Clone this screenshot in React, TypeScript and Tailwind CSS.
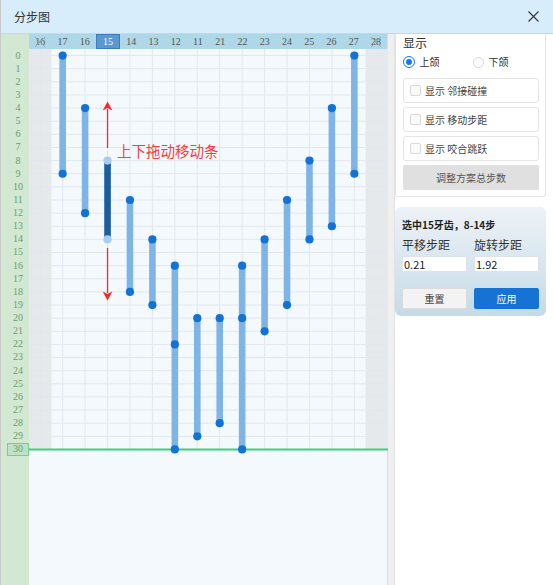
import React from 'react';

const COLS = ['16', '17', '16', '15', '14', '13', '12', '11', '21', '22', '23', '24', '25', '26', '27', '28'];
const ROWS = Array.from({ length: 31 }, (_, i) => i);
const CW = 359 / 16;
const RH = 13.13;
const W = 359;
const H = RH * 31;

// column index, dot rows (first..last)
const BARS: { col: number; dots: number[]; sel?: boolean }[] = [
  { col: 1, dots: [0, 9] },
  { col: 2, dots: [4, 12] },
  { col: 3, dots: [8, 14], sel: true },
  { col: 4, dots: [11, 18] },
  { col: 5, dots: [14, 19] },
  { col: 6, dots: [16, 22, 30] },
  { col: 7, dots: [20, 29] },
  { col: 8, dots: [20, 28] },
  { col: 9, dots: [16, 20, 30] },
  { col: 10, dots: [14, 21] },
  { col: 11, dots: [11, 19] },
  { col: 12, dots: [8, 14] },
  { col: 13, dots: [4, 13] },
  { col: 14, dots: [0, 9] },
];

const cx = (c: number) => (c + 0.5) * CW;
const cy = (r: number) => (r + 0.5) * RH;

const CJK = "font-['Noto_Sans_CJK_SC','Noto_Sans',sans-serif]";
const NUM = "font-['Liberation_Serif','Noto_Sans_CJK_SC',serif]";

function Chart() {
  const ax = cx(3);
  const base = cy(30);
  return (
    <svg width={W} height={H} className="block">
      <rect x={0} y={0} width={CW} height={base} fill="#e6e9ec" />
      <rect x={CW * 15} y={0} width={CW} height={base} fill="#e6e9ec" />
      {ROWS.map(r => (
        <line key={'h' + r} x1={0} x2={W} y1={cy(r)} y2={cy(r)} stroke="#e1e7ee" strokeWidth={1} />
      ))}
      {COLS.map((_, c) => (
        <line key={'v' + c} x1={cx(c)} x2={cx(c)} y1={0} y2={base} stroke="#e1e7ee" strokeWidth={1} />
      ))}
      <line x1={0} x2={W} y1={base} y2={base} stroke="#3fd07a" strokeWidth={2} />
      {BARS.map(b => {
        const x = cx(b.col);
        const y1 = cy(b.dots[0]);
        const y2 = cy(b.dots[b.dots.length - 1]);
        return (
          <g key={b.col}>
            <rect x={x - 3.3} y={y1} width={6.6} height={y2 - y1} fill={b.sel ? '#1b5e9f' : '#7fb4e6'} />
            {b.dots.map(d => (
              <circle key={d} cx={x} cy={cy(d)} r={4.1} fill={b.sel ? '#a9ccef' : '#1372d6'} />
            ))}
          </g>
        );
      })}
      {/* drag arrows */}
      <line x1={ax} x2={ax} y1={60} y2={99} stroke="#ff2424" strokeWidth={1.3} />
      <path d={`M${ax},52.5 L${ax + 4.8},61.5 L${ax},59 L${ax - 4.8},61.5 Z`} fill="#ff2424" />
      <line x1={ax} x2={ax} y1={199} y2={244} stroke="#ff2424" strokeWidth={1.3} />
      <path d={`M${ax},251.5 L${ax + 4.8},242.5 L${ax},245 L${ax - 4.8},242.5 Z`} fill="#ff2424" />
    </svg>
  );
}

function XMark() {
  return (
    <svg width="12" height="12" viewBox="0 0 12 12" className="absolute left-1/2 top-1/2 -translate-x-1/2 -translate-y-1/2">
      <line x1="1" y1="1" x2="11" y2="11" stroke="#9aa3aa" strokeWidth="0.9" />
      <line x1="11" y1="1" x2="1" y2="11" stroke="#9aa3aa" strokeWidth="0.9" />
    </svg>
  );
}

function CheckRow({ label }: { label: string }) {
  return (
    <div className="flex h-[25px] items-center rounded-[3px] border border-[#e4e4e4] bg-white pl-[6px]">
      <span className="h-[11px] w-[11px] rounded-[2px] border border-[#d9d9d9] bg-[#fafafa]" />
      <span className="ml-[4px] text-[10px] leading-none text-[#444]">{label}</span>
    </div>
  );
}

export default function App() {
  return (
    <div className={`flex h-[585px] w-[553px] flex-col overflow-hidden border-l border-[#c9c9c9] bg-white ${CJK}`}>
      {/* title bar */}
      <div className="flex h-[34px] shrink-0 items-center justify-between border-b border-[#c6d7e2] bg-[#d7edfb] pl-[13px] pr-[14px]">
        <span className="text-[12px] text-[#333]">分步图</span>
        <svg width="11" height="11" viewBox="0 0 11 11">
          <line x1="0.5" y1="0.5" x2="10.5" y2="10.5" stroke="#333" strokeWidth="1.1" />
          <line x1="10.5" y1="0.5" x2="0.5" y2="10.5" stroke="#333" strokeWidth="1.1" />
        </svg>
      </div>

      <div className="flex flex-1">
        {/* row labels */}
        <div className={`flex w-[28px] shrink-0 flex-col bg-[#d3e8d3] pl-[6px] ${NUM}`}>
          <div className="h-[15px] shrink-0" />
          {ROWS.map(r => (
            <div key={r} className="flex h-[13.13px] shrink-0 items-center justify-center">
              {r === 30 ? (
                <span className="flex h-[13px] w-full items-center justify-center border border-[#6fd08f] bg-[#bde3c6] text-[10px] leading-none text-[#5f9a6c]">
                  30
                </span>
              ) : (
                <span className="text-[10px] leading-none text-[#6a9e70]">{r}</span>
              )}
            </div>
          ))}
        </div>

        {/* chart */}
        <div className="flex w-[359px] shrink-0 flex-col border-r border-[#d3dde6]">
          <div className={`flex h-[15px] shrink-0 bg-[#aed8e8] ${NUM}`}>
            {COLS.map((c, i) => (
              <div
                key={i}
                className={
                  i === 3
                    ? 'flex flex-1 items-center justify-center border border-[#3d7dbd] bg-[#5a98d2] text-[10px] text-white'
                    : 'relative flex flex-1 items-center justify-center text-[10px] text-[#555]'
                }
              >
                {c}
                {(i === 0 || i === 15) && <XMark />}
              </div>
            ))}
          </div>
          <div className="relative flex-1 bg-[#f4f9fd]">
            <Chart />
            <span className={`absolute left-[88px] top-[93px] text-[14.5px] leading-[18px] text-[#ff3a3a] ${CJK}`}>
              上下拖动移动条
            </span>
          </div>
        </div>

        <div className="w-[6px] shrink-0 bg-[#efefef]" />

        {/* right panel */}
        <div className="flex flex-1 flex-col border-l border-[#e2e2e2] bg-white pr-[7px]">
          <div className="flex flex-col rounded-b-[3px] border border-t-0 border-[#e4e4e4] pb-[6px] pl-[7px] pr-[6px]">
            <div className="pt-[1px] text-[12px] leading-[16px] text-[#333]">显示</div>
            <div className="mt-[4px] flex h-[14px] items-center">
              <span className="flex h-[11.5px] w-[11.5px] items-center justify-center rounded-full border border-[#1677ff] bg-white">
                <span className="h-[5.5px] w-[5.5px] rounded-full bg-[#1677ff]" />
              </span>
              <span className="ml-[5px] text-[10px] leading-none text-[#333]">上颌</span>
              <span className="ml-[33px] h-[11px] w-[11px] rounded-full border border-[#d4d4d4] bg-white" />
              <span className="ml-[5px] text-[10px] leading-none text-[#333]">下颌</span>
            </div>
            <div className="mt-[9px] flex flex-col gap-[4px]">
              <CheckRow label="显示 邻接碰撞" />
              <CheckRow label="显示 移动步距" />
              <CheckRow label="显示 咬合跳跃" />
              <button className="flex h-[25px] items-center justify-center rounded-[2px] bg-[#e0e0e0] text-[10px] text-[#555]">
                调整方案总步数
              </button>
            </div>
          </div>

          <div className="mt-[10px] flex flex-col rounded-[6px] bg-linear-to-b from-[#edf2f6] to-[#c5dbe8] px-[7px] pb-[7px] pt-[11px]">
            <div className="text-[10px] font-bold leading-[14px] text-[#222]">选中15牙齿，8-14步</div>
            <div className="mt-[5px] grid grid-cols-2 gap-x-[7px]">
              <div className="text-[12px] leading-[16px] text-[#333]">平移步距</div>
              <div className="text-[12px] leading-[16px] text-[#333]">旋转步距</div>
              <div className="mt-[3px] flex h-[16px] items-center rounded-[2px] border border-[#dde3e8] bg-white pl-[1px] text-[11px] text-[#222]">
                0.21
              </div>
              <div className="mt-[3px] flex h-[16px] items-center rounded-[2px] border border-[#dde3e8] bg-white pl-[1px] text-[11px] text-[#222]">
                1.92
              </div>
              <button className="mt-[16px] flex h-[21px] items-center justify-center rounded-[2px] border border-[#dcdcdc] bg-[#f3f3f3] text-[10px] text-[#444]">
                重置
              </button>
              <button className="mt-[16px] flex h-[21px] items-center justify-center rounded-[2px] bg-[#1673d3] text-[10px] text-white">
                应用
              </button>
            </div>
          </div>
        </div>
      </div>
    </div>
  );
}
